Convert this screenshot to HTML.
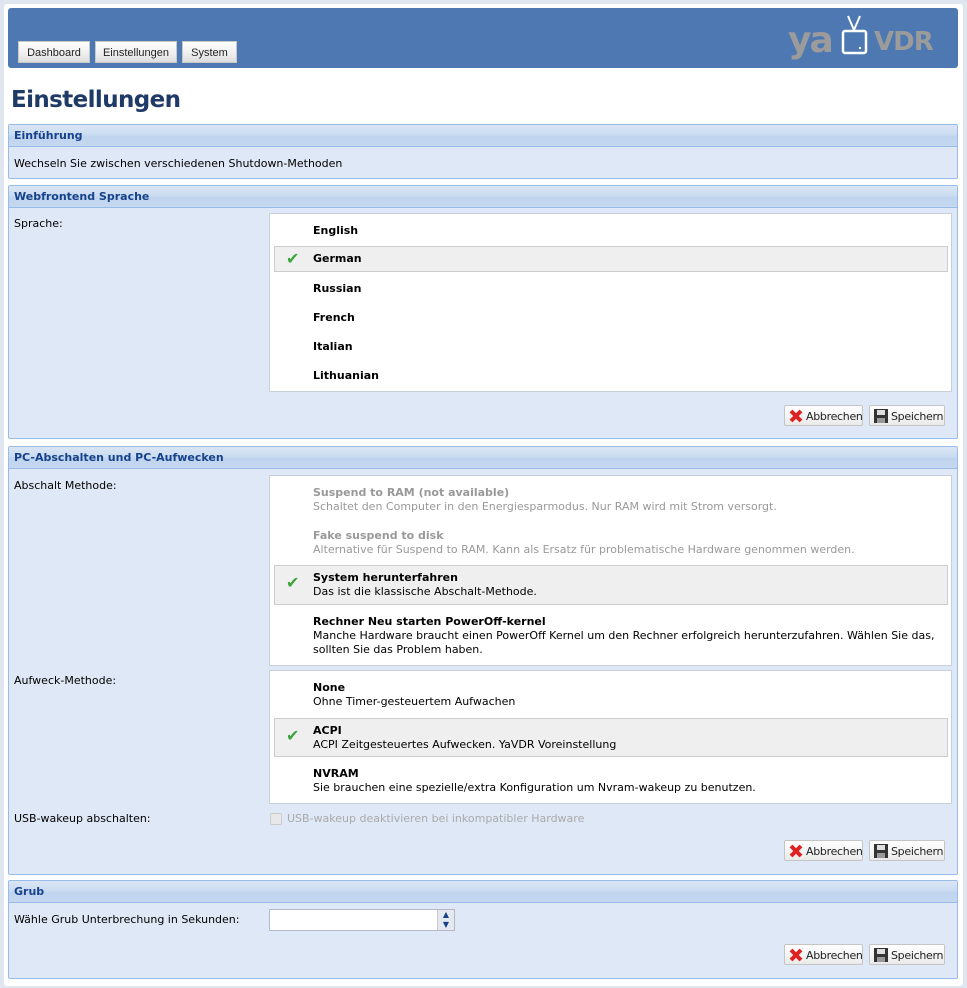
<!DOCTYPE html>
<html><head><meta charset="utf-8"><style>
*{box-sizing:border-box;margin:0;padding:0}
body{width:967px;height:988px;background:#dfe6f0;font-family:"DejaVu Sans","Liberation Sans",sans-serif;font-size:11px;color:#000;position:relative;overflow:hidden}
.page{position:absolute;left:4px;top:4px;width:959px;height:982px;background:#fff;border-radius:3px}
.abs{position:absolute}
.hdr{left:8px;top:8px;width:950px;height:60px;background:#4e78b2;border-radius:3px}
.nb{position:absolute;top:33px;height:22px;background:linear-gradient(#fff,#eee 60%,#ddd);border:1px solid #c8c8c8;font-family:"Liberation Sans",sans-serif;font-size:11px;line-height:22px;text-align:center;color:#222}
h1{position:absolute;left:11px;top:87px;font-size:23px;font-weight:bold;color:#1f3a66;font-family:"DejaVu Sans","Liberation Sans",sans-serif;letter-spacing:-0.6px}
.sec{position:absolute;left:8px;width:950px;background:#dfe8f6;border:1px solid #99bbe8;border-radius:2px}
.sh{height:22px;background:linear-gradient(#dae6f4,#cbdcf1 45%,#c0d4ef 55%,#c6d8f0);border-bottom:1px solid #99bbe8;color:#15428b;font-weight:bold;font-size:11px;line-height:22px;padding-left:5px}
.lbl{position:absolute;left:5px;font-size:11px}
.list{position:absolute;left:260px;width:683px;background:#fff;border:1px solid #c8cfd8}
.it{position:absolute;left:4px;right:3px;padding-left:39px;font-size:11px;line-height:14px}
.it b{font-weight:bold}
.sel{background:#efefef;border:1px solid #ccc;padding-left:38px}
.chk{position:absolute;left:11px;color:#3aa53a;font-size:16px;font-weight:bold}
.dis{color:#999}
.btn{position:absolute;height:21px;border:1px solid #c5c5c5;border-radius:2px;background:linear-gradient(#fff,#eaeaea);font-size:11px;line-height:21px;color:#222;padding-left:21px;font-family:"DejaVu Sans",sans-serif;letter-spacing:-0.3px}
.btn svg{position:absolute;left:3px;top:2px}
</style></head><body>
<div class="page"></div>
<div class="abs hdr">
<div class="nb" style="left:10px;width:72px">Dashboard</div>
<div class="nb" style="left:87px;width:82px">Einstellungen</div>
<div class="nb" style="left:174px;width:55px">System</div>
<div class="abs" style="left:780px;top:12px;font-size:36px;font-weight:bold;color:#9b9b9b;font-family:'DejaVu Sans',sans-serif;letter-spacing:-2px">ya</div>
<svg class="abs" style="left:832px;top:6px" width="30" height="42"><path d="M8 2 L14 16 L20 2" stroke="#fff" stroke-width="2" fill="none"/><rect x="3" y="17" width="23" height="22" rx="2" stroke="#fff" stroke-width="2.5" fill="none"/><rect x="19" y="33" width="2" height="2" fill="#fff"/></svg>
<div class="abs" style="left:866px;top:19px;font-size:26px;font-weight:bold;color:#9b9b9b;font-family:'DejaVu Sans',sans-serif;letter-spacing:-1px">VDR</div>
</div>
<h1>Einstellungen</h1>

<div class="sec" style="top:124px;height:55px"><div class="sh">Einführung</div>
<div class="lbl" style="top:32px">Wechseln Sie zwischen verschiedenen Shutdown-Methoden</div></div>

<div class="sec" style="top:185px;height:254px"><div class="sh">Webfrontend Sprache</div>
<div class="lbl" style="top:31px">Sprache:</div>
<div class="list" style="top:27px;height:179px">
<div class="it" style="top:10px"><b>English</b></div>
<div class="it sel" style="top:32px;height:26px;line-height:24px"><span class="chk" style="top:0">✔</span><b>German</b></div>
<div class="it" style="top:68px"><b>Russian</b></div>
<div class="it" style="top:97px"><b>French</b></div>
<div class="it" style="top:126px"><b>Italian</b></div>
<div class="it" style="top:155px"><b>Lithuanian</b></div>
</div>
<div class="btn" style="left:775px;top:219px;width:79px"><svg width="16" height="16"><path d="M3 3L13 13M13 3L3 13" stroke="#d22" stroke-width="4"/></svg>Abbrechen</div>
<div class="btn" style="left:860px;top:219px;width:76px"><svg width="16" height="16"><rect x="1" y="1" width="14" height="14" fill="#333"/><rect x="4" y="2" width="8" height="5" fill="#ddd"/><rect x="4" y="10" width="8" height="5" fill="#999"/></svg>Speichern</div>
</div>

<div class="sec" style="top:446px;height:429px"><div class="sh">PC-Abschalten und PC-Aufwecken</div>
<div class="lbl" style="top:32px">Abschalt Methode:</div>
<div class="list" style="top:28px;height:191px">
<div class="it dis" style="top:10px"><b>Suspend to RAM (not available)</b><br>Schaltet den Computer in den Energiesparmodus. Nur RAM wird mit Strom versorgt.</div>
<div class="it dis" style="top:53px"><b>Fake suspend to disk</b><br>Alternative für Suspend to RAM. Kann als Ersatz für problematische Hardware genommen werden.</div>
<div class="it sel" style="top:89px;height:40px;padding-top:5px"><span class="chk" style="top:10px">✔</span><b>System herunterfahren</b><br>Das ist die klassische Abschalt-Methode.</div>
<div class="it" style="top:139px"><b>Rechner Neu starten PowerOff-kernel</b><br>Manche Hardware braucht einen PowerOff Kernel um den Rechner erfolgreich herunterzufahren. Wählen Sie das, sollten Sie das Problem haben.</div>
</div>
<div class="lbl" style="top:227px">Aufweck-Methode:</div>
<div class="list" style="top:223px;height:134px">
<div class="it" style="top:10px"><b>None</b><br>Ohne Timer-gesteuertem Aufwachen</div>
<div class="it sel" style="top:47px;height:39px;padding-top:5px"><span class="chk" style="top:10px">✔</span><b>ACPI</b><br>ACPI Zeitgesteuertes Aufwecken. YaVDR Voreinstellung</div>
<div class="it" style="top:96px"><b>NVRAM</b><br>Sie brauchen eine spezielle/extra Konfiguration um Nvram-wakeup zu benutzen.</div>
</div>
<div class="lbl" style="top:365px">USB-wakeup abschalten:</div>
<div class="abs" style="left:261px;top:366px;width:12px;height:12px;border:1px solid #ccc;background:#e8e8e8;border-radius:2px"></div>
<div class="abs dis" style="left:278px;top:365px;font-size:11px;color:#aaa">USB-wakeup deaktivieren bei inkompatibler Hardware</div>
<div class="btn" style="left:775px;top:393px;width:79px"><svg width="16" height="16"><path d="M3 3L13 13M13 3L3 13" stroke="#d22" stroke-width="4"/></svg>Abbrechen</div>
<div class="btn" style="left:860px;top:393px;width:76px"><svg width="16" height="16"><rect x="1" y="1" width="14" height="14" fill="#333"/><rect x="4" y="2" width="8" height="5" fill="#ddd"/><rect x="4" y="10" width="8" height="5" fill="#999"/></svg>Speichern</div>
</div>

<div class="sec" style="top:880px;height:99px"><div class="sh">Grub</div>
<div class="lbl" style="top:32px">Wähle Grub Unterbrechung in Sekunden:</div>
<div class="abs" style="left:260px;top:28px;width:186px;height:22px;border:1px solid #b5b8c8;background:#fff"></div>
<div class="abs" style="left:428px;top:29px;width:17px;height:20px;background:#e4e9f0;border-left:1px solid #ccc;font-size:8px;color:#15428b;text-align:center;line-height:10px">▲<br>▼</div>
<div class="btn" style="left:775px;top:63px;width:79px"><svg width="16" height="16"><path d="M3 3L13 13M13 3L3 13" stroke="#d22" stroke-width="4"/></svg>Abbrechen</div>
<div class="btn" style="left:860px;top:63px;width:76px"><svg width="16" height="16"><rect x="1" y="1" width="14" height="14" fill="#333"/><rect x="4" y="2" width="8" height="5" fill="#ddd"/><rect x="4" y="10" width="8" height="5" fill="#999"/></svg>Speichern</div>
</div>
</body></html>
